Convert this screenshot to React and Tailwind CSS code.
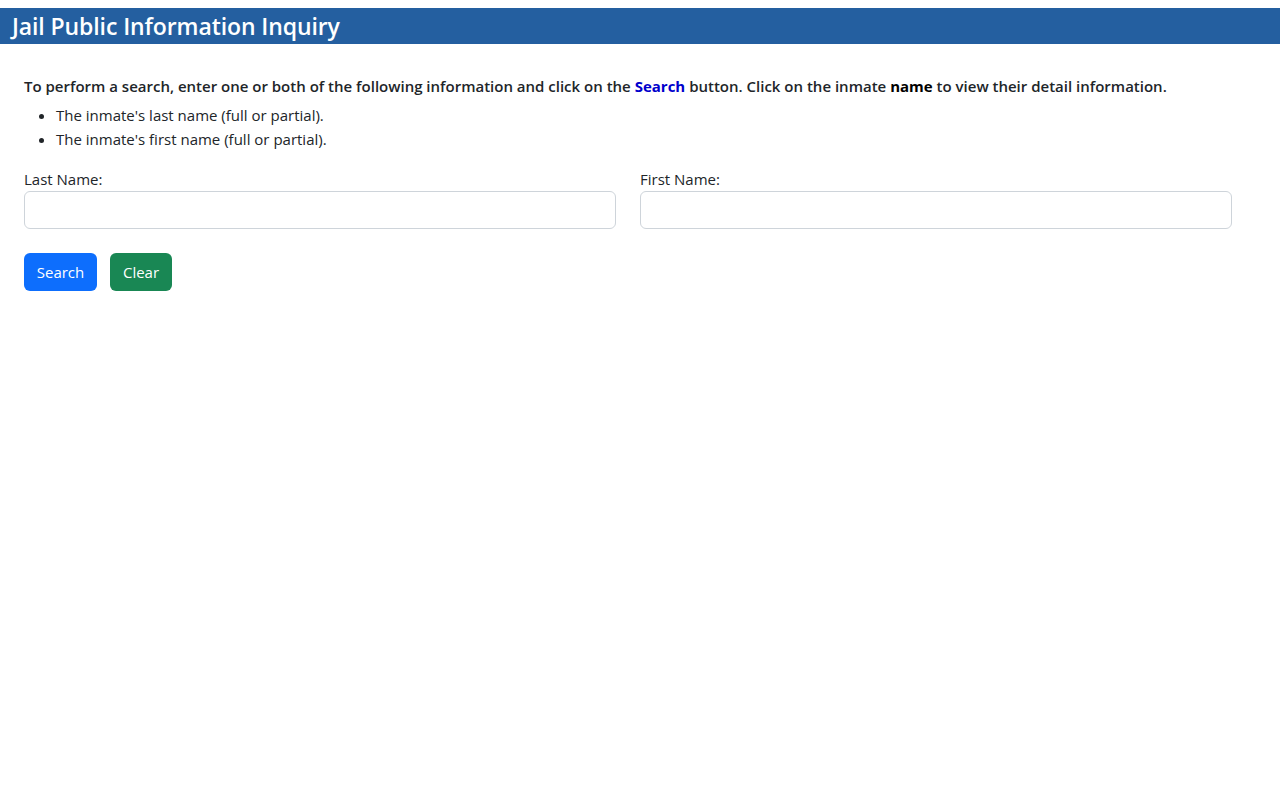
import React from 'react';

export default function App() {
    return (
        <div className="min-h-screen bg-white text-[#212529] font-['Open_Sans',sans-serif]">
            <div className="pt-2">
                <h1 className="h-9 bg-[#245fa0] text-white text-[23px] font-semibold leading-9 pl-3 tracking-[-0.1px]">
                    Jail Public Information Inquiry
                </h1>
            </div>

            <div className="px-6 pt-[30px] w-[1256px]">
                <p className="text-[15px] font-semibold leading-6">
                    To perform a search, enter one or both of the following information and click on the{' '}
                    <span className="text-[#0000cc] font-bold">Search</span> button. Click on the inmate{' '}
                    <span className="text-black font-bold">name</span> to view their detail information.
                </p>
                <ul className="list-disc pl-8 mt-[5px] text-[15px] leading-6">
                    <li>The inmate's last name (full or partial).</li>
                    <li>The inmate's first name (full or partial).</li>
                </ul>

                <div className="grid grid-cols-2 gap-6 w-[1208px] mt-4">
                    <div>
                        <label className="block text-[15px] leading-6">Last Name:</label>
                        <input type="text" className="block w-full h-[38px] border border-[#ced4da] rounded-md px-3 outline-none" />
                    </div>
                    <div>
                        <label className="block text-[15px] leading-6">First Name:</label>
                        <input type="text" className="block w-full h-[38px] border border-[#ced4da] rounded-md px-3 outline-none" />
                    </div>
                </div>

                <div className="flex gap-[13px] mt-6">
                    <button className="h-[38px] w-[73px] rounded-md bg-[#0d6efd] text-white text-[15px]">Search</button>
                    <button className="h-[38px] w-[62px] rounded-md bg-[#198754] text-white text-[15px]">Clear</button>
                </div>
            </div>
        </div>
    );
}
